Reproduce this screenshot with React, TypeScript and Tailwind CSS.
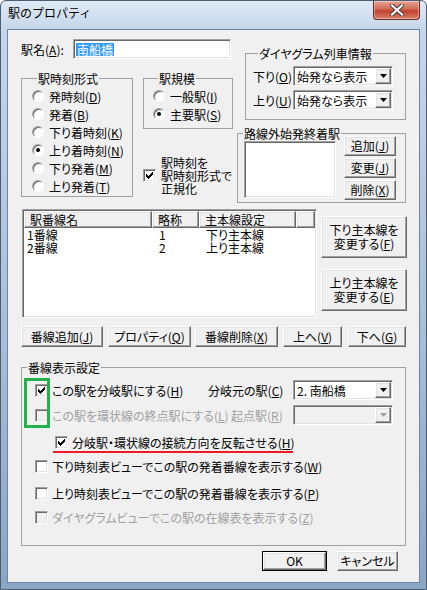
import React from "react";

const raised =
  "border border-t-white border-l-white border-r-[#696969] border-b-[#696969] shadow-[inset_-1px_-1px_0_#a0a0a0,inset_1px_1px_0_#e3e3e3]";
const sunken =
  "border border-t-[#a0a0a0] border-l-[#a0a0a0] border-r-white border-b-white shadow-[inset_1px_1px_0_#696969,inset_-1px_-1px_0_#e3e3e3]";

const K = ({ k }: { k: string }) => (
  <>
    (<span className="underline decoration-1 underline-offset-[1px]">{k}</span>)
  </>
);

const Group = ({ title, className = "", children }: { title: string; className?: string; children?: React.ReactNode }) => (
  <fieldset className={`border border-[#a0a0a0] ${className}`}>
    <legend className="ml-[5px] px-[1px] leading-[13px]">{title}</legend>
    {children}
  </fieldset>
);

const Radio = ({ checked, children }: { checked?: boolean; children: React.ReactNode }) => (
  <div className="flex h-[18px] items-center">
    <span className="grid h-3 w-3 place-items-center rounded-full border border-t-[#a0a0a0] border-l-[#a0a0a0] border-r-white border-b-white bg-white shadow-[inset_1px_1px_0_#696969]">
      {checked && <span className="h-1 w-1 rounded-full bg-black" />}
    </span>
    <span className="ml-[5px] leading-[13px]">{children}</span>
  </div>
);

const Check = ({ checked, disabled }: { checked?: boolean; disabled?: boolean }) => (
  <span className={`grid h-[13px] w-[13px] shrink-0 place-items-center ${sunken} ${disabled ? "bg-[#f0f0f0]" : "bg-white"}`}>
    {checked && (
      <svg width="7" height="7" viewBox="0 0 7 7" shapeRendering="crispEdges">
        <polygon points="0,2 2,4 7,-1 7,2 2,7 0,5" fill="#000" />
      </svg>
    )}
  </span>
);

const Combo = ({ value, disabled }: { value?: string; disabled?: boolean }) => (
  <div className={`flex h-[20px] w-[100px] items-center p-[1px] ${sunken} ${disabled ? "bg-[#f0f0f0]" : "bg-white"}`}>
    <span className="flex-1 pl-[2px] leading-[13px]">{value}</span>
    <span className={`grid h-[16px] w-[16px] place-items-center bg-[#f0f0f0] ${raised}`}>
      <svg width="7" height="4" viewBox="0 0 7 4">
        <polygon points="0,0 7,0 3.5,4" fill={disabled ? "#a0a0a0" : "#000"} />
      </svg>
    </span>
  </div>
);

const Btn = ({ className = "", children }: { className?: string; children: React.ReactNode }) => (
  <div className={`grid place-items-center bg-[#f0f0f0] text-center leading-[14px] ${raised} ${className}`}>
    <span>{children}</span>
  </div>
);

const Disabled = ({ children, className = "" }: { children: React.ReactNode; className?: string }) => (
  <span className={`text-[#a0a0a0] ${className}`}>{children}</span>
);

export default function App() {
  return (
    <div className="flex h-[590px] w-[427px] flex-col overflow-hidden whitespace-nowrap rounded-t-[6px] border border-[#4d5e73] bg-[linear-gradient(180deg,#dfeaf6_0px,#c6d7ea_28px,#abc2dc_50%,#8aa6c5_100%)] font-['Noto_Sans_CJK_JP',sans-serif] text-[12px] text-black [font-feature-settings:'palt']">
      {/* title bar */}
      <div className="flex h-[28px] shrink-0 items-start justify-between">
        <span className="pl-[7px] pt-[5px] leading-[14px] [font-feature-settings:normal]">駅のプロパティ</span>
        <div className="mr-[6px] grid h-[19px] w-[47px] place-items-center rounded-b-[4px] border border-t-0 border-[#6b2a22] bg-[linear-gradient(180deg,#e7a597_0%,#d26a55_45%,#c2402b_55%,#d8826b_100%)] shadow-[inset_0_0_0_1px_rgba(255,255,255,0.35)]">
          <svg width="14" height="12" viewBox="0 0 14 12">
            <path d="M2 1.5 L12 10.5 M12 1.5 L2 10.5" stroke="#4b3a3a" strokeWidth="4.2" strokeLinecap="square" />
            <path d="M2 1.5 L12 10.5 M12 1.5 L2 10.5" stroke="#fff" strokeWidth="2.2" strokeLinecap="square" />
          </svg>
        </div>
      </div>

      {/* client */}
      <div className="mx-[6px] flex h-[554px] shrink-0 flex-col border border-[#6c85a3] bg-[#f0f0f0] pl-[13px] pt-[9px]">
        {/* top section */}
        <div className="flex items-start">
          <div className="flex w-[212px] flex-col">
            <div className="flex h-[20px] items-center">
              <span className="w-[52px] leading-[13px]">
                駅名<K k="A" />:
              </span>
              <div className={`flex h-[20px] w-[158px] items-center bg-white p-[2px] ${sunken}`}>
                <span className="bg-[#3399ff] px-[1px] leading-[13px] text-white">南船橋</span>
              </div>
            </div>
            <div className="mt-[13px] flex items-start">
              <Group title="駅時刻形式" className="h-[125px] w-[112px] pl-[10px] pt-[2px]">
                <Radio>発時刻<K k="D" /></Radio>
                <Radio>発着<K k="B" /></Radio>
                <Radio>下り着時刻<K k="K" /></Radio>
                <Radio checked>上り着時刻<K k="N" /></Radio>
                <Radio>下り発着<K k="M" /></Radio>
                <Radio>上り発着<K k="T" /></Radio>
              </Group>
              <div className="ml-[10px] flex flex-col">
                <Group title="駅規模" className="h-[57px] w-[90px] pl-[9px] pt-[2px]">
                  <Radio>一般駅<K k="I" /></Radio>
                  <Radio checked>主要駅<K k="S" /></Radio>
                </Group>
                <div className="mt-[27px] flex items-center">
                  <Check checked />
                  <span className="ml-[5px] leading-[13px]">
                    駅時刻を
                    <br />
                    駅時刻形式で
                    <br />
                    正規化
                  </span>
                </div>
              </div>
            </div>
          </div>

          <div className="ml-[4px] flex flex-col">
            <Group title="ダイヤグラム列車情報" className="ml-[8px] mt-[8px] h-[73px] w-[161px] pl-[7px] pt-[6px]">
              <div className="flex h-[20px] items-center">
                <span className="w-[40px] leading-[13px]">下り<K k="O" /></span>
                <Combo value="始発なら表示" />
              </div>
              <div className="mt-[4px] flex h-[20px] items-center">
                <span className="w-[40px] leading-[13px]">上り<K k="U" /></span>
                <Combo value="始発なら表示" />
              </div>
            </Group>
            <Group title="路線外始発終着駅" className="mt-[7px] h-[76px] w-[169px]">
              <div className="flex items-start">
                <div className={`ml-[6px] mt-[1px] h-[57px] w-[92px] bg-white ${sunken}`} />
                <div className="-mt-[4px] ml-[8px] flex flex-col gap-[2px]">
                  <Btn className="h-[20px] w-[52px]">追加<K k="J" /></Btn>
                  <Btn className="h-[20px] w-[52px]">変更<K k="J" /></Btn>
                  <Btn className="h-[20px] w-[52px]">削除<K k="X" /></Btn>
                </div>
              </div>
            </Group>
          </div>
        </div>

        {/* list section */}
        <div className="mt-[6px] flex items-start">
          <div className={`ml-[1px] flex h-[109px] w-[295px] flex-col bg-white p-[1px] ${sunken}`}>
            <div className="flex h-[17px] shrink-0 leading-[13px]">
              <div className={`flex w-[128px] items-center bg-[#f0f0f0] pl-[5px] ${raised}`}>駅番線名</div>
              <div className={`flex w-[47px] items-center bg-[#f0f0f0] pl-[5px] ${raised}`}>略称</div>
              <div className={`flex w-[97px] items-center bg-[#f0f0f0] pl-[5px] ${raised}`}>主本線設定</div>
              <div className={`flex-1 bg-[#f0f0f0] ${raised}`} />
            </div>
            {[
              ["1番線", "1", "下り主本線"],
              ["2番線", "2", "上り主本線"],
            ].map(([a, b, c]) => (
              <div key={a} className="flex h-[13px] leading-[13px]">
                <span className="w-[128px] pl-[3px]">{a}</span>
                <span className="w-[47px] pl-[7px]">{b}</span>
                <span className="w-[97px] pl-[7px]">{c}</span>
              </div>
            ))}
          </div>
          <div className="ml-[4px] mt-[7px] flex flex-col">
            <Btn className="h-[42px] w-[86px]">
              下り主本線を
              <br />
              変更する<K k="F" />
            </Btn>
            <Btn className="mt-[11px] h-[42px] w-[86px]">
              上り主本線を
              <br />
              変更する<K k="E" />
            </Btn>
          </div>
        </div>

        {/* buttons row */}
        <div className="mt-[8px] flex h-[21px]">
          <Btn className="w-[82px]">番線追加<K k="J" /></Btn>
          <Btn className="ml-[5px] w-[83px]">プロパティ<K k="Q" /></Btn>
          <Btn className="ml-[4px] w-[83px]">番線削除<K k="X" /></Btn>
          <Btn className="ml-[5px] w-[59px]">上へ<K k="V" /></Btn>
          <Btn className="ml-[6px] w-[58px]">下へ<K k="G" /></Btn>
        </div>

        {/* 番線表示設定 */}
        <Group title="番線表示設定" className="mt-[14px] h-[185px] w-[385px]">
          <div className="relative mt-[6px]">
            <div className="flex h-[20px] items-center pl-[13px]">
              <Check checked />
              <span className="ml-[4px] w-[156px] leading-[13px]">この駅を分岐駅にする<K k="H" /></span>
              <span className="w-[85px] leading-[13px]">分岐元の駅<K k="C" /></span>
              <Combo value="2. 南船橋" />
            </div>
            <div className="mt-[5px] flex h-[20px] items-center pl-[13px]">
              <Check disabled />
              <Disabled className="ml-[4px] w-[179px] leading-[13px]">この駅を環状線の終点駅にする<K k="L" /></Disabled>
              <Disabled className="w-[62px] leading-[13px]">起点駅<K k="R" /></Disabled>
              <Combo disabled />
            </div>
            <div className="pointer-events-none absolute left-[2px] top-[-2px] h-[50px] w-[26px] border-[3px] border-[#22b14c]" />
          </div>
          <div className="mt-[7px] flex h-[20px] items-start">
            <div className="ml-[31px] flex h-[21px] w-[240px] items-center border-b-2 border-[#ed1c24] px-[2px] pt-[2px]">
              <Check checked />
              <span className="ml-[4px] leading-[13px]">分岐駅・環状線の接続方向を反転させる<K k="H" /></span>
            </div>
          </div>
          <div className="mt-[4px] flex h-[20px] items-center pl-[13px]">
            <Check />
            <span className="ml-[4px] leading-[13px]">下り時刻表ビューでこの駅の発着番線を表示する<K k="W" /></span>
          </div>
          <div className="mt-[7px] flex h-[20px] items-center pl-[13px]">
            <Check />
            <span className="ml-[4px] leading-[13px]">上り時刻表ビューでこの駅の発着番線を表示する<K k="P" /></span>
          </div>
          <div className="mt-[4px] flex h-[20px] items-center pl-[13px]">
            <Check disabled />
            <Disabled className="ml-[4px] leading-[13px]">ダイヤグラムビューでこの駅の在線表を表示する<K k="Z" /></Disabled>
          </div>
        </Group>

        {/* OK / Cancel */}
        <div className="mt-[5px] flex h-[20px]">
          <div className="ml-[241px] w-[65px] border border-black">
            <Btn className="h-full w-full">OK</Btn>
          </div>
          <Btn className="ml-[10px] w-[61px]">キャンセル</Btn>
        </div>
      </div>
    </div>
  );
}
